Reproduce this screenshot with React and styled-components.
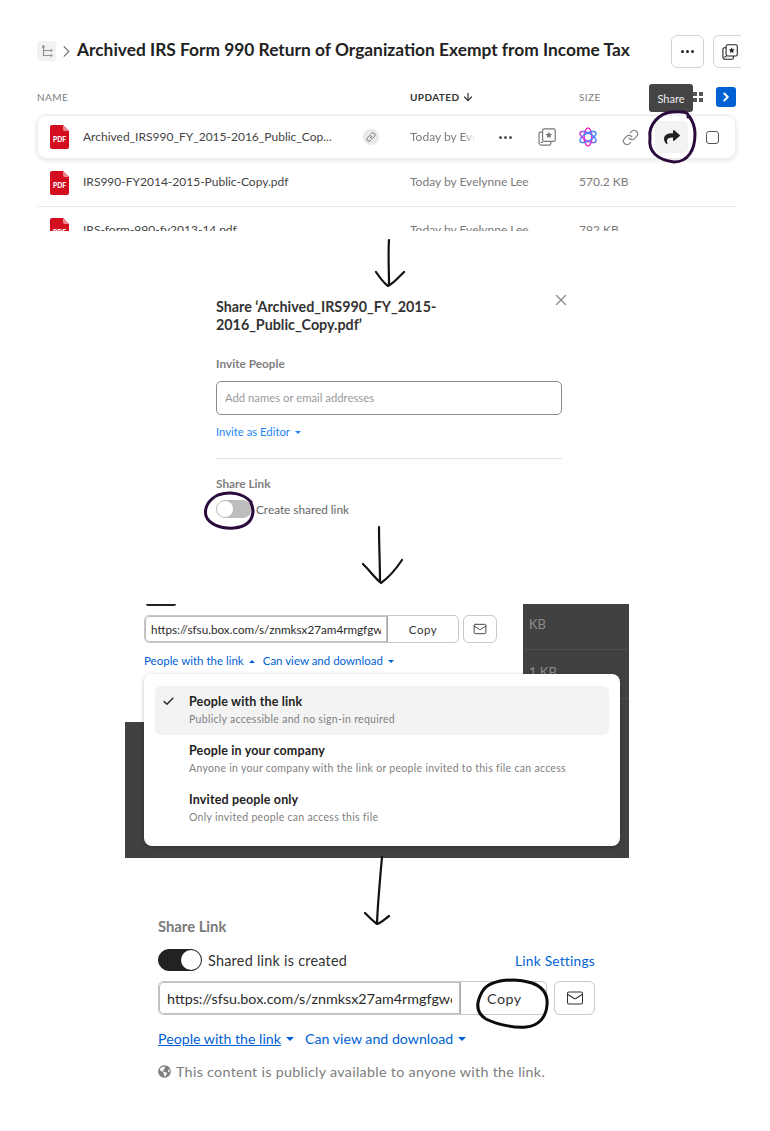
import React from "react";
import styled, { createGlobalStyle } from "styled-components";
import { Check, X, Link as LinkIcon, Mail, ChevronRight, ArrowDown } from "lucide-react";
import { FaShare, FaGlobeAmericas } from "react-icons/fa";

const Global = createGlobalStyle`
  html, body { margin: 0; padding: 0; background: #fff; }
  body { font-family: Lato, "Open Sans", sans-serif; color: #222; }
  * { box-sizing: border-box; }
`;

const Page = styled.div`
  position: relative;
  width: 770px;
  height: 1131px;
  overflow: hidden;
  background: #fff;
`;

/* ---------- file list ---------- */
const ListSection = styled.section`
  height: 231px;
  padding: 35px 0 0 37px;
  overflow: hidden;
`;
const FolderBar = styled.div`
  display: flex;
  align-items: center;
  width: 704px;
  height: 33px;
  overflow: hidden;
`;
const TreeButton = styled.span`
  flex: 0 0 19px;
  display: flex;
  align-items: center;
  justify-content: center;
  height: 20px;
  margin-top: -2px;
  border-radius: 3px;
  background: #f2f2f2;
  color: #8f8f8f;
`;
const Crumb = styled.span`
  flex: 0 0 21px;
  display: flex;
  align-items: center;
  justify-content: center;
  color: #777;
`;
const Title = styled.h1`
  flex: 0 0 553px;
  margin: -3px 0 0;
  font-size: 17.35px;
  line-height: 30px;
  font-weight: 700;
  white-space: nowrap;
  color: #222;
`;
const SquareButton = styled.span`
  flex: 0 0 33px;
  display: flex;
  align-items: center;
  justify-content: center;
  height: 33px;
  margin-left: ${(p) => p.$gap}px;
  border: 1px solid #d3d3d3;
  border-radius: 6px;
  background: #fff;
  color: #222;
`;
const HeaderRow = styled.div`
  display: grid;
  grid-template-columns: 373px 169px 1fr 20px;
  align-items: center;
  width: 699px;
  height: 20px;
  margin-top: 19px;
  font-size: 10px;
  letter-spacing: 0.4px;
  color: #7d7d7d;
`;
const SortLabel = styled.span`
  display: flex;
  align-items: center;
  gap: 3px;
  font-weight: 700;
  color: #333;
`;
const BlueToggle = styled.span`
  display: flex;
  align-items: center;
  justify-content: center;
  width: 20px;
  height: 20px;
  border-radius: 3px;
  background: #0061d5;
  color: #fff;
`;
const FileRow = styled.div`
  display: grid;
  grid-template-columns: 33px 280px 47px 169px 1fr;
  align-items: center;
  width: 699px;
  height: ${(p) => p.$h}px;
  margin-top: ${(p) => p.$mt || 0}px;
  padding-left: 13px;
  font-size: 12px;
  color: #7a7a7a;
  border-bottom: ${(p) => (p.$line ? "1px solid #e8e8e8" : "none")};
  ${(p) =>
    p.$active &&
    `border: 1px solid #ececec; border-radius: 9px; box-shadow: 0 1px 4px rgba(0,0,0,.13); padding-left: 12px;`}
`;
const FileName = styled.span`
  margin-top: ${(p) => p.$nudge || -2}px;
  color: #444;
  white-space: nowrap;
`;
const LinkBadge = styled.span`
  display: flex;
  align-items: center;
  justify-content: center;
  width: 16px;
  height: 16px;
  border-radius: 50%;
  background: #e9e9e9;
  color: #666;
`;
const Updated = styled.span`
  width: ${(p) => (p.$cut ? "66px" : "auto")};
  margin-top: -2px;
  overflow: hidden;
  white-space: nowrap;
  -webkit-mask-image: ${(p) => (p.$cut ? "linear-gradient(90deg,#000 80%,transparent)" : "none")};
`;
const SizeText = styled.span`
  margin-top: -2px;
`;
const RowActions = styled.div`
  display: flex;
  align-items: center;
  margin-left: -94px;
`;
const ActionSlot = styled.span`
  display: flex;
  align-items: center;
  justify-content: center;
  flex: 0 0 ${(p) => p.$w}px;
  color: ${(p) => p.$c || "#777"};
`;
const ShareBox = styled.span`
  flex: 0 0 33px;
  display: flex;
  align-items: center;
  justify-content: center;
  height: 32px;
  margin-left: 4px;
  border-radius: 5px;
  background: #f3f3f3;
  color: #222;
`;
const CheckBox = styled.span`
  width: 13px;
  height: 13px;
  border: 1.5px solid #555;
  border-radius: 3px;
`;
const Tooltip = styled.div`
  position: absolute;
  left: 649px;
  top: 84px;
  width: 44px;
  height: 28px;
  display: flex;
  align-items: center;
  justify-content: center;
  border-radius: 3px;
  background: #444;
  color: #eee;
  font-size: 11px;
`;
const GridGlyph = styled.span`
  display: grid;
  grid-template-columns: 4px 4px;
  gap: 2px;
  position: absolute;
  left: 693px;
  top: 92px;
  i { width: 4px; height: 4px; background: #555; }
`;

/* ---------- share dialog ---------- */
const Dialog = styled.section`
  width: 346px;
  margin: 67px 0 0 216px;
  position: relative;
`;
const DialogTitle = styled.h2`
  margin: 0;
  width: 240px;
  font-size: 14.3px;
  line-height: 18px;
  font-weight: 700;
  color: #333;
`;
const Close = styled.span`
  position: absolute;
  right: -8px;
  top: -7px;
  display: flex;
  color: #8a8a8a;
`;
const FieldLabel = styled.div`
  margin-top: ${(p) => p.$mt}px;
  font-size: 11.8px;
  line-height: 14px;
  font-weight: 700;
  color: #808080;
`;
const InviteInput = styled.div`
  height: 34px;
  margin-top: 10px;
  padding: 0 8px 2px;
  display: flex;
  align-items: center;
  border: 1.5px solid #8a8a8a;
  border-radius: 5px;
  font-size: 11.3px;
  color: #999;
`;
const TextLink = styled.span`
  display: inline-flex;
  align-items: center;
  gap: 5px;
  font-size: ${(p) => (p.$big ? 14.2 : p.$small ? 11.3 : 11.5)}px;
  color: ${(p) => (p.$light ? "#2486fc" : "#0061d5")};
  white-space: nowrap;
  u { text-decoration: underline; }
`;
const LinkSettings = styled(TextLink)`
  font-size: 13.7px;
`;
const InviteLink = styled.div`
  margin-top: 7px;
  line-height: 16px;
`;
const Caret = styled.i`
  width: 0;
  height: 0;
  border-left: ${(p) => (p.$big ? 4 : 3)}px solid transparent;
  border-right: ${(p) => (p.$big ? 4 : 3)}px solid transparent;
  border-top: ${(p) => (p.$up ? "0" : `${p.$big ? 4 : 3}px solid currentColor`)};
  border-bottom: ${(p) => (p.$up ? "3px solid currentColor" : "0")};
`;
const Divider = styled.div`
  height: 1px;
  margin-top: 18px;
  background: #e4e4e4;
`;
const ToggleRow = styled.div`
  display: flex;
  align-items: center;
  gap: 4px;
  margin-top: 9px;
  font-size: 11.8px;
  color: #666;
`;
const Toggle = styled.span`
  display: flex;
  justify-content: ${(p) => (p.$on ? "flex-end" : "flex-start")};
  width: ${(p) => (p.$on ? 44 : 36)}px;
  height: ${(p) => (p.$on ? 22 : 18)}px;
  border-radius: 11px;
  background: ${(p) => (p.$on ? "#222" : "#bdbdbd")};
  border: 1px solid ${(p) => (p.$on ? "#222" : "#bdbdbd")};
  &::after {
    content: "";
    width: ${(p) => (p.$on ? 20 : 16)}px;
    border-radius: 50%;
    background: #fff;
  }
`;

/* ---------- audience menu panel ---------- */
const Backdrop = styled.section`
  position: relative;
  width: 504px;
  height: 254px;
  margin: 86px 0 0 125px;
  background: #414141;
`;
const LinkPanel = styled.div`
  width: 398px;
  height: 118px;
  padding: 11px 0 0 19px;
  background: #fff;
`;
const BehindText = styled.span`
  position: absolute;
  left: 404px;
  top: ${(p) => p.$top}px;
  font-size: 13px;
  color: #8d8d8d;
`;
const BehindLine = styled.i`
  position: absolute;
  left: 398px;
  right: 0;
  top: ${(p) => p.$top}px;
  height: 1px;
  background: #4f4f4f;
`;
const ToggleStub = styled.i`
  position: absolute;
  left: 21px;
  top: 0;
  width: 30px;
  height: 2px;
  border-radius: 0 0 8px 8px;
  background: #222;
`;
const UrlRow = styled.div`
  display: flex;
  gap: ${(p) => p.$gap}px;
  height: ${(p) => p.$h}px;
  width: ${(p) => p.$w}px;
`;
const UrlGroup = styled.div`
  flex: 1;
  display: flex;
  border: 1px solid #c8c8c8;
  border-radius: 5px;
  overflow: hidden;
`;
const UrlField = styled.div`
  flex: 0 0 ${(p) => p.$w}px;
  display: flex;
  align-items: center;
  padding: 0 ${(p) => p.$pad}px;
  border-right: 1px solid #a8a8a8;
  box-shadow: inset 0 0 0 1px #bdbdbd;
  border-radius: 5px 0 0 5px;
  font-size: ${(p) => p.$fs}px;
  color: #2b2b2b;
  overflow: hidden;
  white-space: nowrap;
`;
const UrlClip = styled.span`
  display: block;
  overflow: hidden;
  width: 100%;
`;
const CopyLabel = styled.span`
  flex: 1;
  display: flex;
  align-items: center;
  justify-content: ${(p) => (p.$start ? "flex-start" : "center")};
  padding-left: ${(p) => (p.$start ? "26px" : "0")};
  font-size: ${(p) => p.$fs}px;
  letter-spacing: 0.5px;
  color: #333;
`;
const MailButton = styled.span`
  flex: 0 0 ${(p) => p.$w}px;
  display: flex;
  align-items: center;
  justify-content: center;
  border: 1px solid #c8c8c8;
  border-radius: 6px;
  color: #333;
`;
const LinkLine = styled.div`
  display: flex;
  gap: ${(p) => p.$gap}px;
  margin-top: ${(p) => p.$mt}px;
  line-height: ${(p) => p.$lh}px;
`;
const Menu = styled.div`
  position: absolute;
  left: 19px;
  top: 70px;
  width: 476px;
  height: 172px;
  padding: 12px 11px;
  border-radius: 8px;
  background: #fff;
  box-shadow: 0 1px 4px rgba(0, 0, 0, 0.25);
`;
const MenuItem = styled.div`
  position: relative;
  height: 49px;
  padding: 7px 0 0 34px;
  border-radius: 6px;
  background: ${(p) => (p.$selected ? "#f3f3f3" : "transparent")};
`;
const MenuCheck = styled.span`
  position: absolute;
  left: 7px;
  top: 9px;
  display: flex;
  color: #222;
`;
const MenuTitle = styled.div`
  font-size: 12.5px;
  line-height: 18px;
  font-weight: 700;
  letter-spacing: 0.15px;
  color: #222;
`;
const MenuSub = styled.div`
  font-size: 10.5px;
  line-height: 17px;
  letter-spacing: 0.3px;
  color: #808080;
`;

/* ---------- final share link ---------- */
const ShareLink = styled.section`
  width: 437px;
  margin: 60px 0 0 158px;
`;
const ShareHeading = styled.div`
  font-size: 14.8px;
  line-height: 17px;
  font-weight: 700;
  color: #7a7a7a;
`;
const SharedRow = styled.div`
  display: flex;
  align-items: center;
  margin: 13px 0 9px;
  height: 24px;
  font-size: 14.4px;
  letter-spacing: 0.25px;
  color: #333;
`;
const SharedLabel = styled.span`
  flex: 1;
  margin-left: 6px;
`;
const Note = styled.div`
  display: flex;
  align-items: center;
  gap: 5px;
  margin-top: 15px;
  font-size: 14.3px;
  letter-spacing: 0.3px;
  color: #7d7d7d;
`;
const Ink = styled.svg`
  position: absolute;
  inset: 0;
  width: 770px;
  height: 1131px;
  pointer-events: none;
  fill: none;
  stroke-linecap: round;
  stroke-linejoin: round;
`;

const PdfIcon = () => (
  <svg width="19" height="24" viewBox="0 0 19 24">
    <path d="M2 0h11l6 6v16a2 2 0 0 1-2 2H2a2 2 0 0 1-2-2V2a2 2 0 0 1 2-2z" fill="#d50e1f" />
    <path d="M13 0l6 6h-4a2 2 0 0 1-2-2z" fill="#ef8a92" />
    <text x="9.5" y="16.5" textAnchor="middle" fontFamily="Lato, sans-serif" fontWeight="900" fontSize="6.6" fill="#fff">PDF</text>
  </svg>
);
const TreeIcon = () => (
  <svg width="12" height="12" viewBox="0 0 12 12" fill="none" stroke="currentColor" strokeWidth="1.2">
    <path d="M2.5 1v9.5H9M2.5 5.5H9" />
    <rect x="1" y="0.5" width="2.6" height="2" fill="currentColor" stroke="none" />
    <rect x="9" y="4.5" width="2.4" height="2" fill="currentColor" stroke="none" />
    <rect x="9" y="9.5" width="2.4" height="2" fill="currentColor" stroke="none" />
  </svg>
);
const StarStack = ({ size = 18 }) => (
  <svg width={size} height={size} viewBox="0 0 18 18" fill="none" stroke="currentColor" strokeWidth="1.2">
    <rect x="4.6" y="0.8" width="12.6" height="12.6" rx="1.6" />
    <path d="M4.6 4.2H2.6a1.6 1.6 0 0 0-1.6 1.6v8.6a2.8 2.8 0 0 0 2.8 2.8h7.4a1.6 1.6 0 0 0 1.6-1.6v-2" />
    <path d="M2.6 14.4h2.4" />
    <path d="M10.9 3.6l1 2.2 2.4.3-1.8 1.6.5 2.4-2.1-1.2-2.1 1.2.5-2.4-1.8-1.6 2.4-.3z" fill="currentColor" stroke="none" />
  </svg>
);
const Atom = () => (
  <svg width="18" height="20" viewBox="0 0 18 20" fill="none" strokeWidth="1.5">
    <defs>
      <linearGradient id="atomGrad" x1="0" y1="0" x2="1" y2="1">
        <stop offset="0" stopColor="#2f8cff" />
        <stop offset="0.55" stopColor="#8a5cf5" />
        <stop offset="1" stopColor="#f01fc0" />
      </linearGradient>
    </defs>
    <ellipse cx="9" cy="10" rx="3.8" ry="9" stroke="#ef2fc4" />
    <ellipse cx="9" cy="10" rx="3.8" ry="9" stroke="#3d8bff" transform="rotate(60 9 10)" />
    <ellipse cx="9" cy="10" rx="3.8" ry="9" stroke="url(#atomGrad)" transform="rotate(120 9 10)" />
  </svg>
);
const Dots = ({ size = 3, gap = 3, color = "currentColor" }) => (
  <svg width={size * 3 + gap * 2} height={size} viewBox={`0 0 ${size * 3 + gap * 2} ${size}`}>
    {[0, 1, 2].map((i) => (
      <circle key={i} cx={size / 2 + i * (size + gap)} cy={size / 2} r={size / 2} fill={color} />
    ))}
  </svg>
);

const URL_TEXT = "https://sfsu.box.com/s/znmksx27am4rmgfgw6kfhd";
const MENU = [
  ["People with the link", "Publicly accessible and no sign-in required", true],
  ["People in your company", "Anyone in your company with the link or people invited to this file can access", false],
  ["Invited people only", "Only invited people can access this file", false],
];

export default function App() {
  return (
    <Page>
      <Global />
      <ListSection>
        <FolderBar>
          <TreeButton><TreeIcon /></TreeButton>
          <Crumb><ChevronRight size={19} strokeWidth={1.4} /></Crumb>
          <Title>Archived IRS Form 990 Return of Organization Exempt from Income Tax</Title>
          <SquareButton $gap={41}><Dots size={3} gap={2} /></SquareButton>
          <SquareButton $gap={9}><StarStack size={16} /></SquareButton>
        </FolderBar>
        <HeaderRow>
          <span>NAME</span>
          <SortLabel>UPDATED <ArrowDown size={12} strokeWidth={2.4} /></SortLabel>
          <span>SIZE</span>
          <BlueToggle><ChevronRight size={14} strokeWidth={3.4} /></BlueToggle>
        </HeaderRow>
        <FileRow $active $h={44} $mt={8}>
          <PdfIcon />
          <FileName>Archived_IRS990_FY_2015-2016_Public_Cop...</FileName>
          <LinkBadge><LinkIcon size={10} strokeWidth={2} /></LinkBadge>
          <Updated $cut>Today by Evelynne Lee</Updated>
          <RowActions>
            <ActionSlot $w={41} $c="#555"><Dots size={3} gap={2} /></ActionSlot>
            <ActionSlot $w={41} $c="#777"><StarStack /></ActionSlot>
            <ActionSlot $w={42}><Atom /></ActionSlot>
            <ActionSlot $w={42} $c="#808080"><LinkIcon size={17} strokeWidth={1.6} /></ActionSlot>
            <ShareBox><FaShare size={16} /></ShareBox>
            <ActionSlot $w={49}><CheckBox /></ActionSlot>
          </RowActions>
        </FileRow>
        <FileRow $h={48} $line>
          <PdfIcon />
          <FileName>IRS990-FY2014-2015-Public-Copy.pdf</FileName>
          <span />
          <Updated>Today by Evelynne Lee</Updated>
          <SizeText>570.2 KB</SizeText>
        </FileRow>
        <FileRow $h={46}>
          <PdfIcon />
          <FileName>IRS-form-990-fy2013-14.pdf</FileName>
          <span />
          <Updated>Today by Evelynne Lee</Updated>
          <SizeText>792 KB</SizeText>
        </FileRow>
      </ListSection>
      <GridGlyph><i /><i /><i /><i /></GridGlyph>
      <Tooltip>Share</Tooltip>

      <Dialog>
        <DialogTitle>Share ‘Archived_IRS990_FY_2015-2016_Public_Copy.pdf’</DialogTitle>
        <Close><X size={18} strokeWidth={1.6} /></Close>
        <FieldLabel $mt={23}>Invite People</FieldLabel>
        <InviteInput>Add names or email addresses</InviteInput>
        <InviteLink>
          <TextLink $light $small>Invite as Editor <Caret /></TextLink>
        </InviteLink>
        <Divider />
        <FieldLabel $mt={18}>Share Link</FieldLabel>
        <ToggleRow>
          <Toggle />
          Create shared link
        </ToggleRow>
      </Dialog>

      <Backdrop>
        <BehindText $top={12}>KB</BehindText>
        <BehindText $top={60}>1 KB</BehindText>
        <BehindLine $top={45} />
        <BehindLine $top={94} />
        <LinkPanel>
          <UrlRow $gap={4} $h={28} $w={353}>
            <UrlGroup>
              <UrlField $w={243} $pad={6} $fs={11.7}><UrlClip>{URL_TEXT}</UrlClip></UrlField>
              <CopyLabel $fs={11.5}>Copy</CopyLabel>
            </UrlGroup>
            <MailButton $w={34}><Mail size={14} strokeWidth={1.5} /></MailButton>
          </UrlRow>
          <LinkLine $gap={8} $mt={10} $lh={16}>
            <TextLink>People with the link <Caret $up /></TextLink>
            <TextLink>Can view and download <Caret /></TextLink>
          </LinkLine>
        </LinkPanel>
        <ToggleStub />
        <Menu>
          {MENU.map(([title, sub, selected]) => (
            <MenuItem key={title} $selected={selected}>
              {selected && <MenuCheck><Check size={13} strokeWidth={2.6} /></MenuCheck>}
              <MenuTitle>{title}</MenuTitle>
              <MenuSub>{sub}</MenuSub>
            </MenuItem>
          ))}
        </Menu>
      </Backdrop>

      <ShareLink>
        <ShareHeading>Share Link</ShareHeading>
        <SharedRow>
          <Toggle $on />
          <SharedLabel>Shared link is created</SharedLabel>
          <LinkSettings $big>Link Settings</LinkSettings>
        </SharedRow>
        <UrlRow $gap={7} $h={34} $w={437}>
          <UrlGroup>
            <UrlField $w={302} $pad={8} $fs={14.3}><UrlClip>{URL_TEXT}</UrlClip></UrlField>
            <CopyLabel $fs={14.3} $start>Copy</CopyLabel>
          </UrlGroup>
          <MailButton $w={41}><Mail size={18} strokeWidth={1.4} /></MailButton>
        </UrlRow>
        <LinkLine $gap={11} $mt={15} $lh={18}>
          <TextLink $big><u>People with the link</u> <Caret $big /></TextLink>
          <TextLink $big>Can view and download <Caret $big /></TextLink>
        </LinkLine>
        <Note>
          <FaGlobeAmericas size={13} color="#808080" />
          This content is publicly available to anyone with the link.
        </Note>
      </ShareLink>

      <Ink viewBox="0 0 770 1131">
        <g stroke="#2b0a3d" strokeWidth="3">
          <path d="M688 117C690 112 682 111 672 112C660 113 648 124 650 138C648 152 658 160 674 162C688 162 695 150 695 134C695 126 692 120 689 116" />
          <path d="M251 502C243 493 230 491 218 495C208 500 204 508 206 516C209 524 220 529 234 528C245 527 252 522 253 512C253 508 252 505 251 503" />
        </g>
        <g stroke="#111" strokeWidth="2.2">
          <path d="M389 240C388 255 389 270 389 285M376 272C380 278 384 283 388 286C393 284 399 277 404 272" />
          <path d="M379 527C379 545 380 565 380 582M363 564C370 571 375 578 381 583C388 578 396 569 402 560" />
          <path d="M382 857C380 880 378 900 377 923M365 913C369 917 373 921 377 924C381 923 385 919 389 916" />
        </g>
        <path stroke="#0b0b0b" strokeWidth="3" d="M513 980C498 980 487 983 482 992C476 1003 476 1013 486 1019C498 1025 515 1028 526 1027C538 1026 546 1018 547 1005C548 994 543 987 532 983C525 981 518 980 513 980" />
      </Ink>
    </Page>
  );
}
